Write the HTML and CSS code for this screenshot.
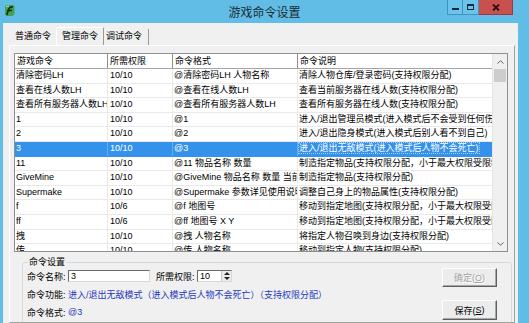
FILE: index.html
```html
<!DOCTYPE html>
<html lang="zh-CN">
<head>
<meta charset="utf-8">
<title>游戏命令设置</title>
<link rel="stylesheet" href="styles.css">
</head>
<body>
<div class="window">
  <div class="titlebar">
    <svg class="app-icon" viewBox="0 0 11 13" width="11" height="13">
      <path d="M1 3 Q1 1 3 1 L9 1 Q10.5 1 10.5 3 L10.5 9 Q10.5 12 7 12 L3 12 Q1 12 1 10 Z" fill="#3fa34d"/>
      <path d="M3 11 Q4 5 6 3.5 Q7.5 2.5 9 3" stroke="#1c2a20" stroke-width="1.6" fill="none"/>
      <path d="M3.5 7 L8 6.2" stroke="#1c2a20" stroke-width="1.4"/>
      <path d="M2 2.5 L5 2" stroke="#b9e6b0" stroke-width="1"/>
    </svg>
    <div class="title">游戏命令设置</div>
    <div class="controls">
      <div class="ctl"><span class="g-min"></span></div>
      <div class="ctl"><span class="g-max"></span></div>
      <div class="ctl close">
        <svg viewBox="0 0 8 7" width="8" height="7"><path d="M1 0.5 L7 6.5 M7 0.5 L1 6.5" stroke="#2a1414" stroke-width="1.8"/></svg>
      </div>
    </div>
  </div>

  <div class="client">
    <div class="tabs">
      <div class="tab">普通命令</div>
      <div class="tab active">管理命令</div>
      <div class="tab last">调试命令</div>
    </div>

    <div class="page">
      <div class="list">
        <div class="list-main">
          <div class="row head">
            <div class="c c1">游戏命令</div><div class="c c2">所需权限</div><div class="c c3">命令格式</div><div class="c c4">命令说明</div>
          </div>
          <div class="row"><div class="c c1">清除密码LH</div><div class="c c2">10/10</div><div class="c c3">@清除密码LH 人物名称</div><div class="c c4">清除人物仓库/登录密码(支持权限分配)</div></div>
          <div class="row"><div class="c c1">查看在线人数LH</div><div class="c c2">10/10</div><div class="c c3">@查看在线人数LH</div><div class="c c4">查看当前服务器在线人数(支持权限分配)</div></div>
          <div class="row"><div class="c c1">查看所有服务器人数LH</div><div class="c c2">10/10</div><div class="c c3">@查看所有服务器人数LH</div><div class="c c4">查看所有服务器在线人数(支持权限分配)</div></div>
          <div class="row"><div class="c c1">1</div><div class="c c2">10/10</div><div class="c c3">@1</div><div class="c c4">进入/退出管理员模式(进入模式后不会受到任何伤害)</div></div>
          <div class="row"><div class="c c1">2</div><div class="c c2">10/10</div><div class="c c3">@2</div><div class="c c4">进入/退出隐身模式(进入模式后别人看不到自己)</div></div>
          <div class="row sel"><div class="c c1">3</div><div class="c c2">10/10</div><div class="c c3">@3</div><div class="c c4"><span class="focus">进入/退出无敌模式(进入模式后人物不会死亡)</span></div></div>
          <div class="row"><div class="c c1">11</div><div class="c c2">10/10</div><div class="c c3">@11 物品名称 数量</div><div class="c c4">制造指定物品(支持权限分配，小于最大权限受限制)</div></div>
          <div class="row"><div class="c c1">GiveMine</div><div class="c c2">10/10</div><div class="c c3">@GiveMine 物品名称 数量 当前</div><div class="c c4">制造指定物品(支持权限分配)</div></div>
          <div class="row"><div class="c c1">Supermake</div><div class="c c2">10/10</div><div class="c c3">@Supermake 参数详见使用说明</div><div class="c c4">调整自己身上的物品属性(支持权限分配)</div></div>
          <div class="row"><div class="c c1">f</div><div class="c c2">10/6</div><div class="c c3">@f 地图号</div><div class="c c4">移动到指定地图(支持权限分配，小于最大权限受限制)</div></div>
          <div class="row"><div class="c c1">ff</div><div class="c c2">10/6</div><div class="c c3">@ff 地图号 X Y</div><div class="c c4">移动到指定地图(支持权限分配，小于最大权限受限制)</div></div>
          <div class="row"><div class="c c1">拽</div><div class="c c2">10/10</div><div class="c c3">@拽 人物名称</div><div class="c c4">将指定人物召唤到身边(支持权限分配)</div></div>
          <div class="row"><div class="c c1">传</div><div class="c c2">10/10</div><div class="c c3">@传 人物名称</div><div class="c c4">移动到指定人物(支持权限分配)</div></div>
        </div>
        <div class="vscroll">
          <div class="sb-btn"><svg viewBox="0 0 7 4" width="7" height="4"><path d="M0.5 3.5 L3.5 0.8 L6.5 3.5" stroke="#606060" stroke-width="1" fill="none"/></svg></div>
          <div class="sb-thumb"></div>
          <div class="sb-track"></div>
          <div class="sb-btn"><svg viewBox="0 0 7 4" width="7" height="4"><path d="M0.5 0.5 L3.5 3.2 L6.5 0.5" stroke="#606060" stroke-width="1" fill="none"/></svg></div>
        </div>
      </div>

      <fieldset class="group">
        <legend>命令设置</legend>
        <div class="gbody">
          <div class="fields">
            <div class="frow">
              <span class="lbl">命令名称:</span>
              <div class="input">3</div>
              <span class="lbl lbl2">所需权限:</span>
              <div class="spin">
                <span class="spin-val">10</span>
                <span class="spin-btns"><span class="tri up"></span><span class="tri down"></span></span>
              </div>
            </div>
            <div class="frow">
              <span class="lbl">命令功能:</span>
              <span class="value">进入/退出无敌模式（进入模式后人物不会死亡）（支持权限分配）</span>
            </div>
            <div class="frow">
              <span class="lbl">命令格式:</span>
              <span class="value">@3</span>
            </div>
          </div>
          <div class="buttons">
            <div class="btn disabled">确定(<u>O</u>)</div>
            <div class="btn">保存(<u>S</u>)</div>
          </div>
        </div>
      </fieldset>
    </div>
  </div>
</div>
</body>
</html>
```

FILE: styles.css
```css
* { box-sizing: border-box; }

body {
  margin: 0;
  width: 529px;
  height: 323px;
  overflow: hidden;
  background: #62bde6;
  font-family: "Liberation Sans", "Noto Sans CJK SC", sans-serif;
  font-size: 9px;
  color: #000;
}

.window {
  height: 323px;
  display: flex;
  flex-direction: column;
}

/* ---------- title bar ---------- */
.titlebar {
  height: 23px;
  flex: none;
  display: grid;
  grid-template-columns: 1fr auto 1fr;
}

.app-icon {
  margin: 4px 0 0 4px;
}

.title {
  font-size: 12px;
  line-height: 24px;
  color: #1d2a32;
  font-family: "Noto Sans CJK SC", sans-serif;
}

.controls {
  justify-self: end;
  display: flex;
  height: 15px;
  margin-right: 16px;
}

.ctl {
  width: 16px;
  height: 15px;
  display: flex;
  align-items: center;
  justify-content: center;
  background: #6ac3ea;
  border: 1px solid #3f93bd;
  border-top: none;
}

.ctl + .ctl { border-left: none; }

.ctl.close {
  width: 34px;
  background: #c8514f;
  border-color: #9c3b3a;
}

.g-min {
  width: 7px;
  height: 2px;
  margin-top: 4px;
  background: #1b2a36;
}

.g-max {
  width: 7px;
  height: 6px;
  border: 1px solid #1b2a36;
  border-top-width: 2px;
}

/* ---------- client ---------- */
.client {
  flex: 1;
  min-height: 0;
  margin: 0 11px 0 3px;
  background: #f0f0f0;
  padding: 4px 3px 0 6px;
  display: flex;
  flex-direction: column;
}

.tabs {
  display: flex;
  align-items: flex-end;
  height: 18px;
  padding-left: 1px;
  flex: none;
}

.tab {
  height: 16px;
  line-height: 15px;
  padding: 0 5px;
  white-space: nowrap;
}

.tab.active {
  height: 18px;
  line-height: 16px;
  border: 1px solid;
  border-color: #ffffff #9a9a9a transparent #ffffff;
  border-bottom: none;
}

.tab.last {
  padding: 0 6px 0 2px;
  border-right: 1px solid #9a9a9a;
}

.page {
  flex: 1;
  min-height: 0;
  border: 1px solid;
  border-color: #ffffff #a0a0a0 #a0a0a0 #ffffff;
  padding: 7px 0 0 4px;
  display: flex;
  flex-direction: column;
  overflow: hidden;
}

/* ---------- list view ---------- */
.list {
  width: 494px;
  height: 199px;
  flex: none;
  border: 1px solid #8d8f92;
  background: #fff;
  display: flex;
}

.list-main {
  flex: 1;
  min-width: 0;
  overflow: hidden;
}

.row {
  display: flex;
  height: 14.6px;
  line-height: 13.6px;
  border-bottom: 1px solid #e9e9e9;
}

.c {
  padding-left: 1px;
  white-space: nowrap;
  overflow: hidden;
  border-right: 1px solid #e9e9e9;
}

.c1 { width: 93px; flex: none; }
.c2 { width: 65px; flex: none; padding-left: 2px; }
.c3 { width: 125px; flex: none; }
.c4 { flex: 1; min-width: 0; border-right: none; }

.row.head {
  height: 15px;
  line-height: 14px;
  border-bottom: 1px solid #a5a5a5;
}

.row.head .c {
  border-right-color: #8f8f8f;
  padding-left: 2px;
}

.row.head .c4 { border-right: none; }

.row.sel {
  background: #3592ea;
  color: #fff;
  border-bottom-color: #3592ea;
}

.row.sel .c { border-right-color: #63aef0; }

.focus {
  outline: 1px dotted rgba(255, 255, 255, 0.55);
  outline-offset: 0;
}

.vscroll {
  width: 15px;
  flex: none;
  display: flex;
  flex-direction: column;
  background: #f0f0f0;
  border-left: 1px solid #e4e4e4;
}

.sb-btn {
  height: 15px;
  flex: none;
  display: flex;
  align-items: center;
  justify-content: center;
}

.sb-thumb {
  height: 13px;
  flex: none;
  margin: 0 1px;
  background: #cdcdcd;
}

.sb-track { flex: 1; }

/* ---------- group box ---------- */
.group {
  margin: 5px 2px 0 8px;
  min-width: 0;
  border: 1px solid #d3dbe0;
  border-radius: 3px;
  padding: 2px 14px 20px 4px;
  flex: none;
}

.group legend {
  padding: 0 1px;
  margin-left: 1px;
  line-height: 11px;
}

.gbody {
  display: flex;
  justify-content: space-between;
}

.fields {
  display: flex;
  flex-direction: column;
  gap: 6px;
}

.frow {
  display: flex;
  align-items: center;
  height: 12px;
  white-space: nowrap;
}

.lbl {
  width: 41px;
  flex: none;
}

.lbl2 { margin-left: 6px; }

.input {
  width: 82px;
  height: 12px;
  line-height: 10px;
  padding-left: 2px;
  background: #fff;
  border: 1px solid;
  border-color: #6a6a6a #d8d8d8 #d8d8d8 #6a6a6a;
}

.spin {
  width: 35px;
  height: 12px;
  display: flex;
  align-items: center;
  justify-content: space-between;
  background: #fff;
  border: 1px solid;
  border-color: #6a6a6a #d8d8d8 #d8d8d8 #6a6a6a;
  padding-left: 2px;
  line-height: 10px;
}

.spin-btns {
  width: 10px;
  height: 10px;
  display: flex;
  flex-direction: column;
  align-items: center;
  justify-content: space-evenly;
  background: #ececec;
  border-left: 1px solid #c8c8c8;
}

.tri {
  width: 0;
  height: 0;
  border-left: 3px solid transparent;
  border-right: 3px solid transparent;
}

.tri.up { border-bottom: 3px solid #222; }
.tri.down { border-top: 3px solid #222; }

.value { color: #1f37c2; }

.buttons {
  display: flex;
  flex-direction: column;
  gap: 13px;
  margin-top: -2px;
}

.btn {
  width: 55px;
  height: 19px;
  display: flex;
  align-items: center;
  justify-content: center;
  background: #ececec;
  border: 1px solid;
  border-color: #ffffff #5e5e5e #5e5e5e #ffffff;
  box-shadow: inset -1px -1px 0 #a8a8a8;
}

.btn + .btn { height: 20px; }

.btn.disabled {
  color: #a3a3a3;
  text-shadow: 1px 1px 0 #ffffff;
}

.btn u { text-underline-offset: 1px; }
```
